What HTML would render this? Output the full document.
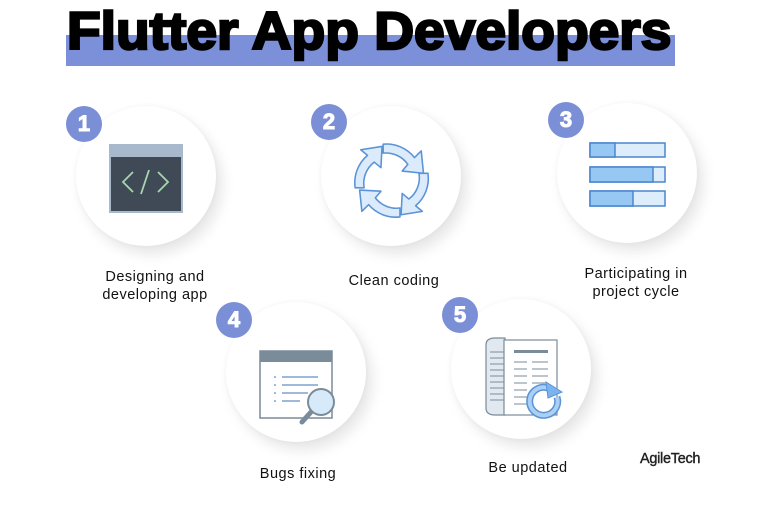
<!DOCTYPE html>
<html><head><style>
body{margin:0;width:779px;height:519px;background:#fff;position:relative;overflow:hidden;font-family:"Liberation Sans",sans-serif}
.band{position:absolute;left:66px;top:35px;width:609px;height:31px;background:#7b90d9}
.title{position:absolute;left:67px;top:1px;font-size:53px;font-weight:bold;color:#000;letter-spacing:0px;white-space:nowrap;-webkit-text-stroke:2.5px #000;transform:scaleX(1.04);transform-origin:left}
.c{position:absolute;width:140px;height:140px;border-radius:50%;background:#fff;box-shadow:6px 8px 14px rgba(0,0,0,0.10),0 0 6px rgba(0,0,0,0.04)}
.b{position:absolute;width:36px;height:36px;border-radius:50%;background:#7b8fd6;color:#fff;font-weight:bold;font-size:22px;text-align:center;line-height:36px;-webkit-text-stroke:1px #fff}
.t{position:absolute;font-size:14.5px;color:#111;text-align:center;line-height:18px;width:200px;letter-spacing:0.5px}
svg{position:absolute;left:0;top:0}
</style></head><body>
<div class="band"></div>
<div class="title">Flutter App Developers</div>
<div class="c" style="left:76px;top:106px"></div>
<div class="c" style="left:321px;top:106px"></div>
<div class="c" style="left:557px;top:103px"></div>
<div class="c" style="left:226px;top:302px"></div>
<div class="c" style="left:451px;top:299px"></div>
<div class="b" style="left:66px;top:106px">1</div>
<div class="b" style="left:311px;top:104px">2</div>
<div class="b" style="left:548px;top:102px">3</div>
<div class="b" style="left:216px;top:302px">4</div>
<div class="b" style="left:442px;top:297px">5</div>
<svg width="779" height="519">
<rect x="110" y="145" width="72" height="67" fill="#3f4a56"/>
<rect x="110" y="145" width="72" height="12" fill="#a9b9cd"/>
<rect x="110" y="145" width="72" height="67" fill="none" stroke="#a9b9cd" stroke-width="2"/>
<g stroke="#a8d5b0" stroke-width="1.8" fill="none"><path d="M133 172 L123 182 L133 192"/><path d="M158 172 L168 182 L158 192"/><path d="M149 170 L141 194"/></g>
<g transform="translate(391 180) scale(1.12) translate(-391 -180)">
<g fill="#dcebfb" stroke="#5a93d6" stroke-width="1.4" stroke-linejoin="round">
<path d="M384 148 A32 32 0 0 1 412 160 L418 154 L420 174 L401 172 L406 166 A24 24 0 0 0 384 156 Z"/>
<path d="M424 174 A32 32 0 0 1 413 203 L419 208 L400 211 L401 192 L407 197 A24 24 0 0 0 416 174 Z"/>
<path d="M399 213 A32 32 0 0 1 371 202 L365 208 L363 189 L382 190 L377 196 A24 24 0 0 0 399 205 Z"/>
<path d="M359 187 A32 32 0 0 1 370 158 L364 153 L383 150 L382 169 L376 164 A24 24 0 0 0 367 187 Z"/>
</g></g>
<g stroke="#4a86cf" stroke-width="1.5">
<rect x="590" y="143" width="75" height="14" fill="#deedfb"/><rect x="590" y="143" width="25" height="14" fill="#97c8f4"/>
<rect x="590" y="167" width="75" height="15" fill="#deedfb"/><rect x="590" y="167" width="63" height="15" fill="#97c8f4"/>
<rect x="590" y="191" width="75" height="15" fill="#deedfb"/><rect x="590" y="191" width="43" height="15" fill="#97c8f4"/>
</g>
<rect x="260" y="351" width="72" height="67" fill="#fff" stroke="#7a8b9a" stroke-width="1.5"/>
<rect x="260" y="351" width="72" height="11" fill="#7a8b9a"/>
<g stroke="#7ea2d0" stroke-width="1.5"><path d="M282 377H318M282 385H318M282 393H308M282 401H300"/></g>
<g fill="#7ea2d0"><circle cx="275" cy="377" r="1"/><circle cx="275" cy="385" r="1"/><circle cx="275" cy="393" r="1"/><circle cx="275" cy="401" r="1"/></g>
<path d="M302 422 L311 412" stroke="#7a8b9a" stroke-width="5" stroke-linecap="round"/>
<circle cx="321" cy="402" r="13" fill="#d7eafa" stroke="#7a8b9a" stroke-width="2"/>
<path d="M486 345 Q486 338 495 338 L505 338 L505 415 L495 415 Q486 415 486 408 Z" fill="#e1e8f0" stroke="#7a8b9a" stroke-width="1.2"/>
<g stroke="#7a8b9a" stroke-width="1"><path d="M490 352H505M490 358H505M490 364H505M490 370H505M490 376H505M490 382H505M490 388H505M490 394H505M490 400H505"/></g>
<rect x="504" y="340" width="53" height="75" fill="#fff" stroke="#7a8b9a" stroke-width="1.2"/>
<rect x="514" y="350" width="34" height="3" fill="#7a8b9a"/>
<g stroke="#7a8b9a" stroke-width="1"><path d="M514 362H527M532 362H548M514 369H527M532 369H548M514 376H527M532 376H548M514 383H527M532 383H548M514 390H527M514 397H527M514 404H527"/></g>
<path d="M557 397 A14 14 0 1 1 548 388" fill="none" stroke="#5a93d6" stroke-width="7"/>
<path d="M557 397 A14 14 0 1 1 548 388" fill="none" stroke="#aad0f6" stroke-width="4"/>
<path d="M546 382 L562 392 L548 398 Z" fill="#7ab3ef" stroke="#5a93d6" stroke-width="1"/>
</svg>
<div class="t" style="left:55px;top:268px">Designing and<br>developing app</div>
<div class="t" style="left:294px;top:272px">Clean coding</div>
<div class="t" style="left:536px;top:265px">Participating in<br>project cycle</div>
<div class="t" style="left:198px;top:465px">Bugs fixing</div>
<div class="t" style="left:428px;top:459px">Be updated</div>
<div style="position:absolute;left:640px;top:451px;font-size:14.5px;color:#222;letter-spacing:-0.3px;-webkit-text-stroke:0.4px #222">AgileTech</div>
</body></html>
